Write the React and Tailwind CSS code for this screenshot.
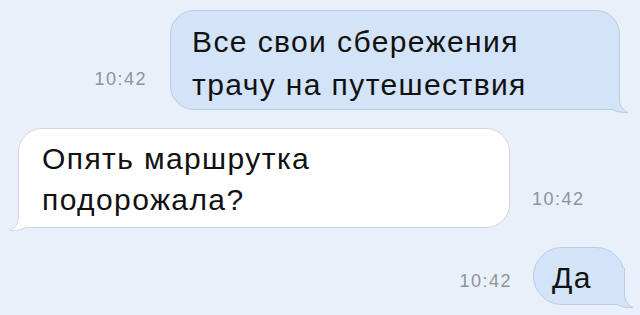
import React from "react";

function Tail({ fill, stroke, side = "right" }) {
  const pos =
    side === "right"
      ? "absolute right-[-12px] bottom-[-8px] w-[44px] h-[44px]"
      : "absolute left-[-12px] bottom-[-8px] w-[44px] h-[44px]";
  return (
    <svg className={pos} viewBox="0 0 44 44" width="44" height="44">
      <g transform={side === "left" ? "translate(44,0) scale(-1,1)" : undefined}>
        <path
          d="M0 0 H32.5 V26 C32.5 33 36 37 41 39.5 C35 40 29 38.5 25 36.5 H0 Z"
          fill={fill}
        />
        <path
          d="M32.5 0 V26 C32.5 33 36 37 41 39.5 C35 40 29 38.5 25 36.5 H0"
          fill="none"
          stroke={stroke}
          strokeWidth="1"
        />
      </g>
    </svg>
  );
}

function Time() {
  return (
    <span className="text-[18px] leading-[20px] tracking-[1.5px] text-[#8e949c] whitespace-nowrap">
      10:42
    </span>
  );
}

export default function App() {
  const blue = "#d3e3f8";
  const blueBorder = "#b9cbe5";
  const white = "#ffffff";
  const whiteBorder = "#d3d8df";
  return (
    <div className="w-[640px] h-[315px] overflow-hidden bg-[#e9f0fa] font-['Liberation_Sans',Arial,sans-serif] text-[#111]">
      <div className="flex justify-end items-end pt-[10px] pr-[20px]">
        <div className="mr-[23px] mb-[18px]">
          <Time />
        </div>
        <div className="relative w-[450px] h-[100px] rounded-[24px] bg-[#d3e3f8] border border-[#b9cbe5] pl-[21px] pt-[9px] text-[30px] leading-[43px] tracking-[1.4px] whitespace-nowrap">
          <Tail fill={blue} stroke={blueBorder} />
          <span className="relative">
            Все свои сбережения
            <br />
            трачу на путешествия
          </span>
        </div>
      </div>

      <div className="flex items-end mt-[18px] pl-[18px]">
        <div className="relative w-[492px] h-[100px] rounded-[24px] bg-white border border-[#d3d8df] pl-[23px] pt-[9px] text-[30px] leading-[41px] tracking-[1.4px] whitespace-nowrap">
          <Tail fill={white} stroke={whiteBorder} side="left" />
          <span className="relative">
            Опять маршрутка
            <br />
            подорожала?
          </span>
        </div>
        <div className="ml-[22px] mb-[16px]">
          <Time />
        </div>
      </div>

      <div className="flex justify-end items-end mt-[19px] pr-[15px]">
        <div className="mr-[21px] mb-[11px]">
          <Time />
        </div>
        <div className="relative w-[92px] h-[58px] rounded-[29px] bg-[#d3e3f8] border border-[#b9cbe5] pl-[18px] pt-[8px] text-[30px] leading-[44px] tracking-[1.4px] whitespace-nowrap">
          <Tail fill={blue} stroke={blueBorder} />
          <span className="relative">Да</span>
        </div>
      </div>
    </div>
  );
}
